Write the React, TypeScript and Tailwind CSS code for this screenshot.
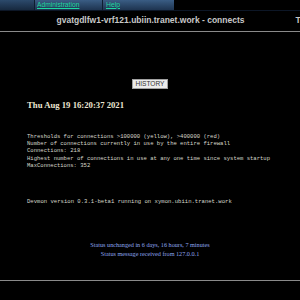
import React from "react";

export default function App() {
  const mono = { fontFamily: '"Liberation Mono", "DejaVu Sans Mono", monospace' };
  return (
    <div className="w-[300px] h-[300px] bg-black overflow-hidden relative">
      {/* menu bar */}
      <div className="flex h-[11px] border-b border-[#0c1626]" style={{ fontFamily: '"Liberation Sans", Arial, sans-serif' }}>
        <div className="w-[35px] h-[10px] bg-gradient-to-b from-[#2c4a6c] to-[#17293f] border-r border-[#0f1d2e]" />
        <div className="w-[68px] h-[10px] bg-gradient-to-b from-[#3a5d84] to-[#1e3450] border-r border-[#0f1d2e] flex items-center pl-[2px]">
          <span className="text-[6.7px] leading-none text-[#1ed8a0] underline">Administration</span>
        </div>
        <div className="w-[71px] h-[10px] bg-gradient-to-b from-[#3a5d84] to-[#1e3450] flex items-center pl-[3px]">
          <span className="text-[6.8px] leading-none text-[#1ed8a0] underline">Help</span>
        </div>
      </div>
      {/* title row */}
      <div className="flex whitespace-nowrap h-[19px] items-center pl-[56.5px]" style={{ fontFamily: '"Liberation Sans", Arial, sans-serif' }}>
        <span className="text-[8.5px] font-bold text-[#c8c8c8]">gvatgdlfw1-vrf121.ubiin.tranet.work - connects</span>
        <span className="ml-[51px] text-[8.5px] font-bold text-[#c8c8c8]">Thu Aug 19 16:20:37 2021</span>
      </div>
      <div className="h-[1px] bg-[#8a8a8a] mt-[1px]" />
      {/* history button */}
      <div className="flex justify-center mt-[47px]">
        <div className="w-[36px] h-[10px] bg-[#ececec] border border-[#a0a0a0] flex items-center justify-center" style={{ fontFamily: '"Liberation Sans", Arial, sans-serif' }}>
          <span className="text-[6.6px] leading-none text-[#333]">HISTORY</span>
        </div>
      </div>
      {/* date */}
      <div className="mt-[11px] pl-[27px] text-[8.7px] leading-[10px] font-bold text-[#ece6d2]" style={{ fontFamily: '"Liberation Serif", "Times New Roman", serif' }}>
        Thu Aug 19 16:20:37 2021
      </div>
      {/* pre block */}
      <div className="mt-[23px] pl-[27px] text-[5.55px] leading-[7.2px] text-[#d8d8cc] whitespace-pre" style={mono}>
        <div>Thresholds for connections &gt;100000 (yellow), &gt;400000 (red)</div>
        <div>Number of connections currently in use by the entire firewall</div>
        <div>Connections: 218</div>
        <div>Highest number of connections in use at any one time since system startup</div>
        <div>MaxConnections: 352</div>
      </div>
      <div className="mt-[29px] pl-[27px] text-[5.6px] leading-[7.2px] text-[#d8d8cc] whitespace-pre" style={mono}>
        Devmon version 0.3.1-beta1 running on xymon.ubiin.tranet.work
      </div>
      {/* status */}
      <div className="mt-[36px] flex flex-col items-center text-[6.2px] leading-[8.6px] text-[#8ea6ee]" style={{ fontFamily: '"Liberation Serif", "Times New Roman", serif' }}>
        <div>Status unchanged in 6 days, 16 hours, 7 minutes</div>
        <div>Status message received from 127.0.0.1</div>
      </div>
      <div className="h-[1px] bg-[#8a8a8a] mt-[22px]" />
    </div>
  );
}
